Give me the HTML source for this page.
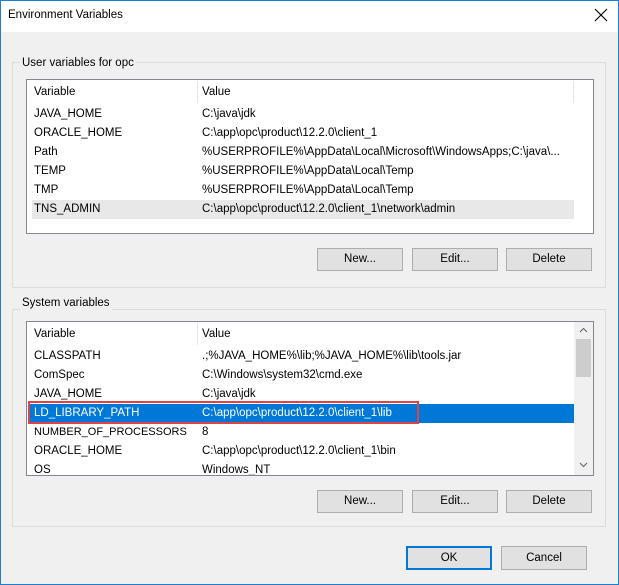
<!DOCTYPE html>
<html><head><meta charset="utf-8"><style>
*{margin:0;padding:0;box-sizing:border-box}
body{width:619px;height:585px;background:#f0f0f0;font-family:"Liberation Sans",sans-serif;font-size:11.5px;color:#000;position:relative;overflow:hidden}
.a{position:absolute}
.win{left:0;top:0;width:619px;height:585px;border:1px solid #1a7fd4;}
.title{left:1px;top:1px;width:617px;height:31px;background:#fff}
.grp{border:1px solid #dcdcdc}
.lbl{background:#f0f0f0;padding:0 2px;line-height:14px}
.list{background:#fff;border:1px solid #828790;overflow:hidden}
.t{position:absolute;white-space:nowrap;line-height:19px;top:1px}
.btn{background:#e1e1e1;border:1px solid #adadad;text-align:center;line-height:21px}
</style></head><body>
<div class="a win"></div>
<div class="a title"></div>
<div class="a" style="left:8px;top:9px">Environment Variables</div>
<div class="a" style="left:594px;top:5px">
<svg width="14" height="14" viewBox="0 0 14 14" style="margin-top:3px"><path d="M1 1L13 13M13 1L1 13" stroke="#000" stroke-width="1.1"/></svg></div>

<div class="a grp" style="left:12px;top:62px;width:594px;height:226px"></div>
<div class="a lbl" style="left:20px;top:56px">User variables for opc</div>
<div class="a list" style="left:26px;top:79px;width:568px;height:155px">
 <div class="a" style="left:170px;top:1px;width:1px;height:22px;background:#e5e5e5"></div>
 <div class="a" style="left:546px;top:1px;width:1px;height:22px;background:#e5e5e5"></div>
 <div class="a" style="top:2px;left:0;width:100%;height:19px"><div class="t" style="left:7px">Variable</div><div class="t" style="left:175px">Value</div></div>
 <div class="a" style="left:5px;top:120px;width:542px;height:19px;background:#e8e8e8"></div>
 <div class="a" style="top:24px;left:0;width:100%"><div class="t" style="left:7px">JAVA_HOME</div><div class="t" style="left:175px">C:\java\jdk</div></div>
 <div class="a" style="top:43px;left:0;width:100%"><div class="t" style="left:7px">ORACLE_HOME</div><div class="t" style="left:175px">C:\app\opc\product\12.2.0\client_1</div></div>
 <div class="a" style="top:62px;left:0;width:100%"><div class="t" style="left:7px">Path</div><div class="t" style="left:175px">%USERPROFILE%\AppData\Local\Microsoft\WindowsApps;C:\java\...</div></div>
 <div class="a" style="top:81px;left:0;width:100%"><div class="t" style="left:7px">TEMP</div><div class="t" style="left:175px">%USERPROFILE%\AppData\Local\Temp</div></div>
 <div class="a" style="top:100px;left:0;width:100%"><div class="t" style="left:7px">TMP</div><div class="t" style="left:175px">%USERPROFILE%\AppData\Local\Temp</div></div>
 <div class="a" style="top:119px;left:0;width:100%"><div class="t" style="left:7px">TNS_ADMIN</div><div class="t" style="left:175px">C:\app\opc\product\12.2.0\client_1\network\admin</div></div>
</div>
<div class="a btn" style="left:317px;top:248px;width:86px;height:23px">New...</div>
<div class="a btn" style="left:412px;top:248px;width:86px;height:23px">Edit...</div>
<div class="a btn" style="left:506px;top:248px;width:86px;height:23px">Delete</div>

<div class="a grp" style="left:12px;top:309px;width:594px;height:218px"></div>
<div class="a lbl" style="left:20px;top:296px">System variables</div>
<div class="a list" style="left:26px;top:321px;width:568px;height:155px">
 <div class="a" style="left:170px;top:1px;width:1px;height:22px;background:#e5e5e5"></div>
 <div class="a" style="top:2px;left:0;width:100%"><div class="t" style="left:7px">Variable</div><div class="t" style="left:175px">Value</div></div>
 <div class="a" style="left:547px;top:0;width:19px;height:153px;background:#f0f0f0"></div>
 <div class="a" style="left:549px;top:17px;width:15px;height:38px;background:#cdcdcd"></div>
 <svg class="a" style="left:552px;top:5px" width="9" height="6"><path d="M1 5L4.5 1.5L8 5" stroke="#606060" fill="none"/></svg>
 <svg class="a" style="left:552px;top:140px" width="9" height="6"><path d="M1 1L4.5 4.5L8 1" stroke="#606060" fill="none"/></svg>
 <div class="a" style="left:1px;top:82px;width:546px;height:19px;background:#0078d7"></div>
 <div class="a" style="top:24px;left:0;width:100%"><div class="t" style="left:7px">CLASSPATH</div><div class="t" style="left:175px">.;%JAVA_HOME%\lib;%JAVA_HOME%\lib\tools.jar</div></div>
 <div class="a" style="top:43px;left:0;width:100%"><div class="t" style="left:7px">ComSpec</div><div class="t" style="left:175px">C:\Windows\system32\cmd.exe</div></div>
 <div class="a" style="top:62px;left:0;width:100%"><div class="t" style="left:7px">JAVA_HOME</div><div class="t" style="left:175px">C:\java\jdk</div></div>
 <div class="a" style="top:81px;left:0;width:100%;color:#fff"><div class="t" style="left:7px">LD_LIBRARY_PATH</div><div class="t" style="left:175px">C:\app\opc\product\12.2.0\client_1\lib</div></div>
 <div class="a" style="top:100px;left:0;width:100%"><div class="t" style="left:7px;font-size:11px">NUMBER_OF_PROCESSORS</div><div class="t" style="left:175px">8</div></div>
 <div class="a" style="top:119px;left:0;width:100%"><div class="t" style="left:7px">ORACLE_HOME</div><div class="t" style="left:175px">C:\app\opc\product\12.2.0\client_1\bin</div></div>
 <div class="a" style="top:138px;left:0;width:100%"><div class="t" style="left:7px">OS</div><div class="t" style="left:175px">Windows_NT</div></div>
</div>
<div class="a" style="left:28px;top:401px;width:391px;height:23px;border:2px solid #e04343"></div>
<div class="a btn" style="left:317px;top:490px;width:86px;height:23px">New...</div>
<div class="a btn" style="left:412px;top:490px;width:86px;height:23px">Edit...</div>
<div class="a btn" style="left:506px;top:490px;width:86px;height:23px">Delete</div>

<div class="a btn" style="left:406px;top:546px;width:86px;height:24px;border:2px solid #0078d7;line-height:20px">OK</div>
<div class="a btn" style="left:501px;top:546px;width:86px;height:24px;line-height:22px">Cancel</div>
</body></html>
